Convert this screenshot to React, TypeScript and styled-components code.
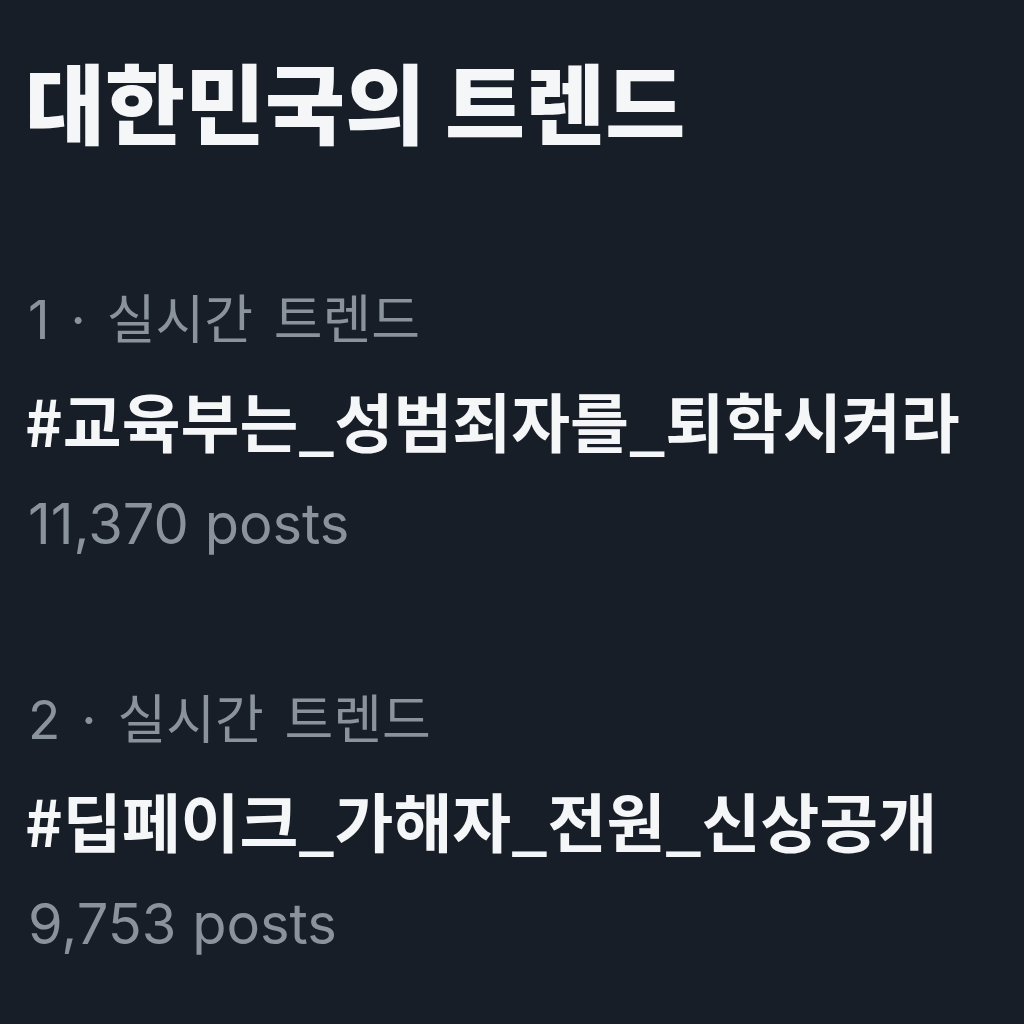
import React from 'react';
import styled, { createGlobalStyle } from 'styled-components';

const GlobalStyle = createGlobalStyle`
  html, body { margin: 0; padding: 0; background: #181e28; }
  body { font-family: "Inter", "Noto Sans CJK KR", sans-serif; }
`;

const Page = styled.main`
  width: 1024px; height: 1024px; box-sizing: border-box;
  background: #181e28; overflow: hidden;
  padding: 50px 0 0 25px;
`;
const Title = styled.h1`
  margin: 0; color: #f5f6f7;
  font-family: "Noto Sans CJK KR", sans-serif;
  font-weight: 900; font-size: 87px; line-height: 100px;
`;
const TrendList = styled.div` display: flex; flex-direction: column; gap: 134px; margin-top: 140px; `;
const Trend = styled.div` display: flex; flex-direction: column; `;
const Meta = styled.div`
  color: #8a929c; font-size: 53px; line-height: 60px; padding-left: 3px; word-spacing: 6px;
`;
const Tag = styled.div`
  color: #f5f6f7; font-family: "Noto Sans CJK KR", sans-serif;
  font-weight: 700; font-size: 64px; line-height: 76px; margin-top: 31px;
`;
const Count = styled.div`
  color: #8a929c; font-size: 56px; line-height: 64px; margin-top: 35px; padding-left: 3px;
`;

const trends = [
  { rank: 1, tag: '#교육부는_성범죄자를_퇴학시켜라', posts: '11,370' },
  { rank: 2, tag: '#딥페이크_가해자_전원_신상공개', posts: '9,753' },
];

export default function App() {
  return (
    <>
      <GlobalStyle />
      <Page>
        <Title>대한민국의 트렌드</Title>
        <TrendList>
          {trends.map((t) => (
            <Trend key={t.rank}>
              <Meta>{t.rank} · 실시간 트렌드</Meta>
              <Tag>{t.tag}</Tag>
              <Count>{t.posts} posts</Count>
            </Trend>
          ))}
        </TrendList>
      </Page>
    </>
  );
}
